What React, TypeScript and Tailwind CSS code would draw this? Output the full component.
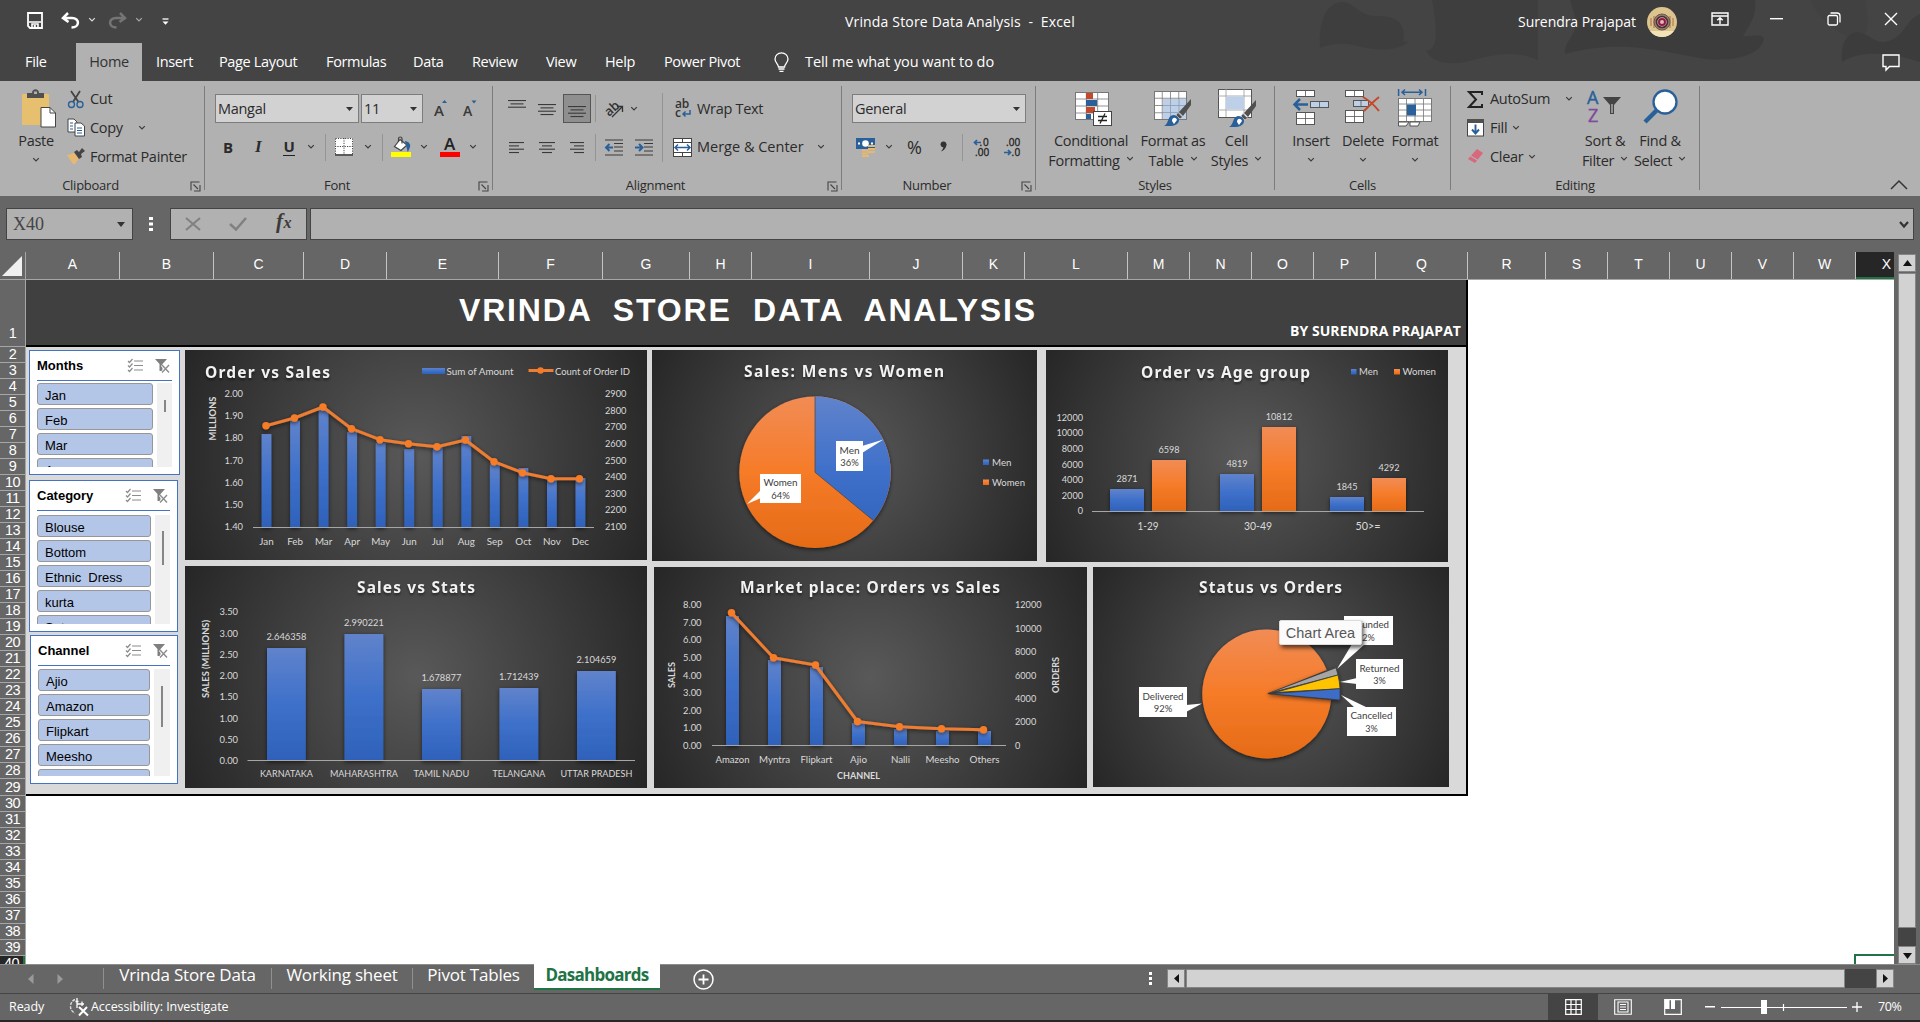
import React from "react";

type Kids = { children?: React.ReactNode };

/* ---------- small shared pieces ---------- */

function Ico({ w, h, cls = "", children }: { w: number; h: number; cls?: string } & Kids) {
  return (
    <svg width={w} height={h} viewBox={`0 0 ${w} ${h}`} fill="none" className={"shrink-0 overflow-visible " + cls}>
      {children}
    </svg>
  );
}

function Chev({ cls = "", color = "#3b3b3b" }: { cls?: string; color?: string }) {
  return (
    <Ico w={8} h={6} cls={cls}>
      <path d="M1.2 1.2 L4 4 L6.8 1.2" stroke={color} strokeWidth="1.2" />
    </Ico>
  );
}

function Launcher() {
  return (
    <Ico w={11} h={11}>
      <path d="M1 9.5V1H9.5M3.5 3.5L8 8M10 4V10H4" stroke="#444" strokeWidth="1.1" />
    </Ico>
  );
}

function Combo({ cls, children }: { cls: string } & Kids) {
  return (
    <div className={"flex h-[29px] shrink-0 items-center justify-between border border-[#7d7d7d] bg-[#d2d2d2] pr-[5px] pl-[2px] " + cls}>
      <span>{children}</span>
      <Ico w={7} h={4}>
        <path d="M0 0H7L3.5 4Z" fill="#333" />
      </Ico>
    </div>
  );
}

function Group({ cls, label, launcher, children }: { cls: string; label: string; launcher?: boolean } & Kids) {
  return (
    <div className={"flex h-[104px] shrink-0 flex-col border-r border-[#7c7c7c] " + cls}>
      <div className="flex h-[91px] shrink-0">{children}</div>
      <div className="flex h-[18px] items-center text-[13px] tracking-[-0.25px]">
        <span className={"flex-1 text-center " + (launcher ? "-ml-[9px]" : "ml-[14px]")}>{label}</span>
        <span className="flex w-[14px]">{launcher && <Launcher />}</span>
      </div>
    </div>
  );
}

function Big({ cls, icon, lines, drop }: { cls: string; icon: React.ReactNode; lines: string[]; drop?: boolean }) {
  return (
    <div className={"flex shrink-0 flex-col items-center " + cls}>
      <div className="flex h-[45px] items-start justify-center pt-[3px]">{icon}</div>
      <div className="h-[20px] leading-[20px] whitespace-nowrap">{lines[0]}</div>
      <div className="flex h-[20px] items-center gap-[6px] leading-[20px] whitespace-nowrap">
        {lines[1] && <span>{lines[1]}</span>}
        <Chev cls={drop ? "-mt-[4px]" : "-mt-[2px]"} />
      </div>
    </div>
  );
}

function Lines({ ws, right, center, y0 = 1 }: { ws: number[]; right?: boolean; center?: boolean; y0?: number }) {
  return (
    <>
      {ws.map((w, i) => {
        const x = right ? 18 - w : center ? (18 - w) / 2 : 0;
        return <rect key={i} x={x} y={y0 + i * 3.33} width={w} height="1.1" fill="#3a3a3a" />;
      })}
    </>
  );
}

const Vr = ({ cls }: { cls: string }) => <div className={"w-px shrink-0 bg-[#949494] " + cls} />;

/* ---------- title bar ---------- */

function TitleBar() {
  return (
    <div className="relative h-[81px] bg-[#444444]">
      <svg className="absolute top-0 right-0 opacity-80" width="640" height="81" viewBox="0 0 640 81" fill="#3b3b3b">
        <path d="M40 48C38 15 50 2 63 2C76 3 80 18 100 16C122 16 126 30 123 42L128 41C120 52 95 51 78 46C62 42 50 44 40 48Z" opacity=".75" />
        <path d="M152 0H258V60C235 50 215 54 190 61C165 67 150 60 146 50C160 52 156 20 152 0Z" opacity=".75" />
        <path d="M290 0H475C477 15 470 25 463 36C475 37 480 33 484 38C482 55 455 62 425 59C385 52 340 38 285 54C284 40 295 40 296 20Z" />
        <path d="M530 0H586C588 20 590 34 580 40C560 38 540 20 530 0Z" opacity=".35" />
        <path d="M562 62C560 42 568 32 578 32C590 34 592 42 605 42C625 38 625 20 640 14V62C610 52 580 50 562 62Z" />
      </svg>
      <div className="relative flex h-[43px] items-center text-[14px] text-white">
        <Ico w={16} h={17} cls="mt-[-3px] ml-[27px]">
          <path d="M1 1H15V16H3L1 14Z" stroke="#fff" strokeWidth="1.8" />
          <path d="M2 10H14M5 16V12H11V16" stroke="#fff" strokeWidth="1.6" />
          <rect x="6.8" y="13" width="2" height="3" fill="#fff" />
        </Ico>
        <Ico w={19} h={17} cls="mt-[-2px] ml-[18px]">
          <path d="M7 1L2 6L7.500 10M2.500 6H11C19 6 19 15.500 10.500 15.500" stroke="#fff" strokeWidth="2.500" />
        </Ico>
        <Chev cls="mt-[-4px] ml-[8px]" color="#ddd" />
        <Ico w={19} h={17} cls="mt-[-2px] ml-[12px]">
          <path d="M12 1L17 6L11.500 10M16.500 6H8C0 6 0 15.500 8.500 15.500" stroke="#757575" strokeWidth="2.500" />
        </Ico>
        <Chev cls="mt-[-4px] ml-[8px]" color="#aaa" />
        <Ico w={7} h={7} cls="ml-[19px]">
          <path d="M0.500 1H6.500" stroke="#fff" strokeWidth="1.300" />
          <path d="M0.500 3.500H6.500L3.500 6.800Z" fill="#fff" />
        </Ico>
        <span className="ml-[676px] w-[673px] tracking-[0.17px] whitespace-pre">Vrinda Store Data Analysis  -  Excel</span>
        <span className="w-[129px] tracking-[-0.05px]">Surendra Prajapat</span>
        <Ico w={30} h={30}>
          <circle cx="15" cy="15" r="15" fill="#dcc48f" />
          <path d="M3 24A15 15 0 0 0 27 24Z" fill="#f3e3b8" />
          <path d="M4 11V19M7 9V21M23 9V21M26 11V19" stroke="#b98a62" strokeWidth="1.500" />
          <circle cx="15" cy="15" r="8" fill="#9b7a66" stroke="#6b5a4a" />
          <circle cx="15" cy="15" r="5.500" fill="#d8b6a0" stroke="#45303a" strokeWidth="1.600" />
          <circle cx="15" cy="15" r="3" fill="#e8b8b0" stroke="#8c1d4b" strokeWidth="2" />
        </Ico>
        <Ico w={18} h={14} cls="mt-[-5px] ml-[34px]">
          <path d="M1 1H17V13H1ZM1 4H17M9 12V6M6.300 8.300L9 5.800L11.700 8.300" stroke="#fff" strokeWidth="1.400" />
        </Ico>
        <Ico w={13} h={2} cls="mt-[-6px] ml-[41px]">
          <rect width="13" height="1.400" fill="#fff" />
        </Ico>
        <Ico w={14} h={14} cls="mt-[-5px] ml-[44px]">
          <rect x="1" y="3.500" width="9.500" height="9.500" rx="1.500" stroke="#fff" strokeWidth="1.300" />
          <path d="M3.500 1H10C12 1 13 2 13 4V10.500" stroke="#fff" strokeWidth="1.300" />
        </Ico>
        <Ico w={14} h={14} cls="mt-[-5px] ml-[43px]">
          <path d="M1 1L13 13M13 1L1 13" stroke="#fff" strokeWidth="1.400" />
        </Ico>
      </div>
      <div className="relative flex h-[38px] items-center text-[14.500px] tracking-[-0.35px] whitespace-nowrap text-white">
        <span className="ml-[25px] w-[51px]">File</span>
        <span className="flex h-full w-[66px] items-center justify-center bg-[#b1b1b1] text-[#333]">Home</span>
        <span className="ml-[14px] w-[63px]">Insert</span>
        <span className="w-[107px]">Page Layout</span>
        <span className="w-[87px]">Formulas</span>
        <span className="w-[59px]">Data</span>
        <span className="w-[74px]">Review</span>
        <span className="w-[59px]">View</span>
        <span className="w-[59px]">Help</span>
        <span className="w-[110px]">Power Pivot</span>
        <Ico w={15} h={20}>
          <path d="M4.500 15C4.500 12 1 11 1 7A6.500 6.200 0 0 1 14 7C14 11 10.500 12 10.500 15ZM4.500 17H10.500M5.500 19.300H9.500" stroke="#fff" strokeWidth="1.300" />
        </Ico>
        <span className="ml-[16px] w-[1077px] tracking-[-0.06px]">Tell me what you want to do</span>
        <Ico w={18} h={17}>
          <path d="M1 1H17V12.500H7.500L4 16V12.500H1Z" stroke="#fff" strokeWidth="1.400" />
        </Ico>
      </div>
    </div>
  );
}

/* ---------- ribbon icons ---------- */

const PasteIcon = (
  <Ico w={34} h={39}>
    <rect x="0" y="5" width="27" height="31" rx="1" fill="#e7c06f" />
    <path d="M5 9V4H10C10 -1 17 -1 17 4H22V9Z" fill="#505050" />
    <rect x="12" y="2.500" width="3" height="2.500" fill="#b1b1b1" />
    <path d="M19 18.500H28L33.500 24V38H19Z" fill="#fff" stroke="#444" />
    <path d="M28 18.500V24H33.500" stroke="#444" />
  </Ico>
);

function MiniGrid({ cols, rows, w, h, x = 0, y = 0, fill = "#fff", stroke = "#555" }: { cols: number; rows: number; w: number; h: number; x?: number; y?: number; fill?: string; stroke?: string }) {
  return (
    <>
      <rect x={x + 0.5} y={y + 0.5} width={w - 1} height={h - 1} fill={fill} stroke={stroke} />
      {Array.from({ length: cols - 1 }, (_, i) => (
        <path key={"c" + i} d={`M${x + ((i + 1) * w) / cols} ${y}v${h}`} stroke={stroke} strokeWidth=".8" />
      ))}
      {Array.from({ length: rows - 1 }, (_, i) => (
        <path key={"r" + i} d={`M${x} ${y + ((i + 1) * h) / rows}h${w}`} stroke={stroke} strokeWidth=".8" />
      ))}
    </>
  );
}

const Brush = ({ x, y }: { x: number; y: number }) => (
  <g transform={`translate(${x} ${y})`}>
    <path d="M27 0V6L19 17L15 13Z" fill="#505050" />
    <path d="M14 13.500L18.500 18L16 20L12 16Z" fill="#505050" stroke="#ddd" strokeWidth=".6" />
    <path d="M0 27C5 25 3 17 9 16C15 16 17 22 13 25C10 27.500 5 27 0 27Z" fill="#2a6099" />
    <path d="M8 22C8 18 12 18 13 21L10 25Z" fill="#fff" />
  </g>
);

const CondIcon = (
  <Ico w={37} h={36} cls="mt-[3px]">
    <MiniGrid cols={3} rows={4} w={34} h={28} stroke="#777" />
    <rect x="11" y="1" width="7" height="6" fill="#c4492a" />
    <rect x="11" y="8" width="11" height="6" fill="#2a6099" />
    <rect x="11" y="15" width="9" height="6" fill="#c4492a" />
    <rect x="11" y="22" width="5" height="5" fill="#2a6099" />
    <rect x="18.500" y="19.500" width="18" height="14" fill="#fff" stroke="#444" />
    <path d="M23 24.500H32M23 28.500H32M30 21.500L25 31.500" stroke="#222" strokeWidth="1.300" />
  </Ico>
);
const TableIcon = (
  <Ico w={38} h={36} cls="mt-[2px]">
    <MiniGrid cols={4} rows={4} w={33} h={29} stroke="#777" />
    <rect x="9" y="8" width="23" height="20" fill="#bdd0e8" />
    <path d="M16.500 8V28M25 8V28M9 14.500H32M9 21.500H32" stroke="#8a9bb0" strokeWidth=".8" />
    <Brush x={10} y={8} />
  </Ico>
);
const StyleIcon = (
  <Ico w={38} h={38}>
    <rect x=".5" y=".5" width="33" height="28" fill="#fff" stroke="#555" />
    <path d="M8 0V28M26 0V28M0 7H33M0 21H33" stroke="#999" strokeWidth=".8" />
    <rect x="8" y="7.500" width="18" height="13" fill="#bdd0e8" />
    <Brush x={11} y={11} />
  </Ico>
);
const InsertIcon = (
  <Ico w={36} h={36}>
    <MiniGrid cols={2} rows={1} x={3} y={1} w={19} h={7} />
    <MiniGrid cols={2} rows={1} x={17} y={12} w={19} h={7} fill="#bdd0e8" />
    <MiniGrid cols={2} rows={2} x={3} y={23} w={19} h={13} />
    <path d="M15 15.500H2M7 10L1.500 15.500L7 21" stroke="#2a6099" strokeWidth="2.500" />
  </Ico>
);
const DeleteIcon = (
  <Ico w={36} h={36}>
    <MiniGrid cols={2} rows={1} x={0} y={1} w={19} h={7} />
    <MiniGrid cols={2} rows={1} x={8} y={11} w={16} h={7} fill="#bdd0e8" />
    <MiniGrid cols={2} rows={2} x={0} y={21} w={19} h={13} />
    <path d="M18 8C25 12 30 17 34 22M34 8C29 12 23 18 19 22" stroke="#c4492a" strokeWidth="2" />
  </Ico>
);
const FormatIcon = (
  <Ico w={34} h={38}>
    <path d="M.6 0V7M27.500 0V7M4 3.300H24M7 .5L4 3.300L7 6M21 .5L24 3.300L21 6" stroke="#2a6099" strokeWidth="1.500" />
    <MiniGrid cols={4} rows={4} x={0} y={9} w={34} h={24} stroke="#777" />
    <rect x="9" y="15.500" width="9" height="11" fill="#2a6099" />
    <path d="M.5 33H11L8 37H.5ZM12 33H22L20 37H12Z" fill="#fff" stroke="#555" />
  </Ico>
);
const SortIcon = (
  <Ico w={36} h={36}>
    <text x="0" y="15" fontSize="18" fontFamily="Open Sans, sans-serif" fill="#2a6099" stroke="#2a6099" strokeWidth=".4">A</text>
    <text x="1" y="32.500" fontSize="18" fontFamily="Open Sans, sans-serif" fill="#7f4a9c" stroke="#7f4a9c" strokeWidth=".4">Z</text>
    <path d="M16 8H34L27 16V25H23V16Z" fill="#444" />
    <path d="M25 15V24" stroke="#ddd" />
  </Ico>
);
const FindIcon = (
  <Ico w={35} h={36}>
    <path d="M2 33L14 21" stroke="#2a6099" strokeWidth="4.500" />
    <circle cx="22" cy="13" r="11.500" fill="#fff" stroke="#2a6099" strokeWidth="2.300" />
  </Ico>
);

/* ---------- ribbon ---------- */

function Ribbon() {
  return (
    <div className="flex h-[115px] bg-[#b1b1b1] pt-[5px] text-[14.500px] tracking-[-0.3px] text-[#2b2b2b]">
      <Group cls="w-[205px]" label="Clipboard" launcher>
        <Big cls="ml-[13px] w-[46px]" icon={<div className="ml-[5px]">{PasteIcon}</div>} lines={["Paste"]} />
        <div className="-mt-px ml-[8px] flex flex-col whitespace-nowrap">
          <div className="flex h-[28px] items-center">
            <Ico w={18} h={19}>
              <path d="M4 1L11.500 12M13 1L6 12" stroke="#444" strokeWidth="1.800" />
              <circle cx="4.500" cy="14.500" r="3" stroke="#2a6099" strokeWidth="1.400" />
              <circle cx="13" cy="14.500" r="3" stroke="#2a6099" strokeWidth="1.400" />
            </Ico>
            <span className="ml-[5px]">Cut</span>
          </div>
          <div className="flex h-[29px] items-center">
            <Ico w={18} h={19}>
              <path d="M1 1H7L10 4V14H1Z" fill="#fff" stroke="#444" />
              <path d="M3 5H6M3 8H6M3 11H6" stroke="#2a6099" />
              <path d="M8 5H14L17.500 8V18H8Z" fill="#fff" stroke="#444" />
              <path d="M10 10H15M10 12.500H15M10 15H15" stroke="#2a6099" />
            </Ico>
            <span className="ml-[5px] w-[48px]">Copy</span>
            <Chev />
          </div>
          <div className="flex h-[29px] items-center">
            <Ico w={18} h={17}>
              <path d="M0 7L7 5L12 10L8 16H6Z" fill="#e7b870" />
              <path d="M7 4L10 2L12 4L15 0L18 3L14 6L15 9L12 11Z" fill="#444" />
            </Ico>
            <span className="ml-[5px]">Format Painter</span>
          </div>
        </div>
      </Group>

      <Group cls="w-[288px]" label="Font" launcher>
        <div className="ml-[10px] flex flex-col">
          <div className="mt-[8px] flex h-[29px] items-center">
            <Combo cls="w-[144px]">Mangal</Combo>
            <Combo cls="ml-[2px] w-[62px]">11</Combo>
            <Ico w={16} h={17} cls="ml-[11px]">
              <text x="0" y="16" fontSize="15" fontWeight="600" fontFamily="Open Sans, sans-serif" fill="#3a3a3a">A</text>
              <path d="M8 3L10.500 0L13 3Z" fill="#2a6099" />
            </Ico>
            <Ico w={16} h={17} cls="ml-[13px]">
              <text x="0" y="16" fontSize="14" fontWeight="600" fontFamily="Open Sans, sans-serif" fill="#3a3a3a">A</text>
              <path d="M8.500 .5L11 3.500L13.500 .5Z" fill="#2a6099" />
            </Ico>
          </div>
          <div className="mt-[10px] flex h-[28px] items-center text-[15px]">
            <b className="ml-[8px] w-[32px]">B</b>
            <i className="w-[28px] text-[17px] font-bold [font-family:'Liberation_Serif',serif]">I</i>
            <span className="mr-[12px] flex h-[18px] w-[12px] items-center justify-center border-b border-[#222] font-bold">U</span>
            <Chev />
            <Vr cls="ml-[10px] h-[27px]" />
            <Ico w={18} h={18} cls="ml-[9px]">
              <rect width="18" height="18" fill="#fff" />
              <path d="M.5 .5H17.500M.5 .5V16M17.500 .5V16M9 0V16M0 8.500H18" stroke="#444" strokeDasharray="1.200 1.200" />
              <path d="M0 17H18" stroke="#333" strokeWidth="1.600" />
            </Ico>
            <Chev cls="ml-[11px]" />
            <Vr cls="ml-[10px] h-[27px]" />
            <Ico w={21} h={20} cls="ml-[8px]">
              <path d="M9 2.500L16 8L10 13.500L3.500 9.500Z" fill="#fff" stroke="#444" strokeWidth="1.200" />
              <path d="M7.500 5V1.500C7.500 -.5 11 -.5 11 1.500V6.500" stroke="#444" strokeWidth="1.200" />
              <path d="M15 5C19 6 19.500 9 17 13Z" fill="#2a6099" stroke="#2a6099" strokeWidth="1.500" />
              <rect y="15" width="20" height="5" fill="#ffff00" />
            </Ico>
            <Chev cls="ml-[8px]" />
            <Ico w={20} h={20} cls="ml-[12px]">
              <text x="4" y="13" fontSize="17" fontWeight="600" fontFamily="Open Sans, sans-serif" fill="#222">A</text>
              <rect y="15" width="20" height="5" fill="#ff0000" />
            </Ico>
            <Chev cls="ml-[9px]" />
          </div>
        </div>
      </Group>

      <Group cls="w-[349px]" label="Alignment" launcher>
        <div className="ml-[15px] flex flex-col">
          <div className="mt-[8px] flex h-[29px] items-center">
            <Ico w={18} h={16} cls="mt-[-6px]"><Lines ws={[18, 13, 18]} center y0={2} /></Ico>
            <Ico w={18} h={16} cls="ml-[12px]"><Lines ws={[18, 13, 18, 13]} center y0={3} /></Ico>
            <div className="ml-[7px] flex h-[29px] w-[28px] items-end justify-center border border-[#555] bg-[#8f8f8f] pb-[1px]">
              <Ico w={18} h={16}><Lines ws={[18, 13, 18, 13]} center y0={1} /></Ico>
            </div>
            <Vr cls="ml-[4px] h-[27px]" />
            <Ico w={20} h={18} cls="ml-[8px]">
              <text x="2" y="15" fontSize="13" fontWeight="600" fontFamily="Open Sans, sans-serif" fill="#333" transform="rotate(-42 6 12)">ab</text>
              <path d="M8 17L18 7M13 6.500H18.500V12" stroke="#333" strokeWidth="1.300" />
            </Ico>
            <Chev cls="ml-[6px]" />
          </div>
          <div className="mt-[10px] flex h-[28px] items-center">
            <Ico w={15} h={13} cls="ml-[1px]"><Lines ws={[15, 10, 15, 10]} /></Ico>
            <Ico w={18} h={13} cls="ml-[14px]"><Lines ws={[16, 10, 16, 10]} center /></Ico>
            <Ico w={18} h={13} cls="ml-[10px]"><Lines ws={[14, 10, 14, 10]} right /></Ico>
            <Vr cls="ml-[11px] h-[27px]" />
            <Ico w={18} h={17} cls="ml-[9px]">
              <path d="M0 1H18M9 4.500H18M9 8H18M9 12H18M0 16H18" stroke="#3a3a3a" strokeWidth="1.200" />
              <path d="M8 8.500H2M4.500 5L1 8.500L4.500 12" stroke="#2a6099" strokeWidth="2" />
            </Ico>
            <Ico w={18} h={17} cls="ml-[12px]">
              <path d="M0 1H18M9 4.500H18M9 8H18M9 12H18M0 16H18" stroke="#3a3a3a" strokeWidth="1.200" />
              <path d="M0 8.500H6M4 5L7.500 8.500L4 12" stroke="#2a6099" strokeWidth="2" />
            </Ico>
          </div>
        </div>
        <Vr cls="mt-[7px] ml-[9px] h-[69px]" />
        <div className="ml-[10px] flex flex-col whitespace-nowrap">
          <div className="mt-[8px] flex h-[29px] items-center">
            <Ico w={19} h={18}>
              <text x="2" y="8" fontSize="12" fontWeight="600" fontFamily="Open Sans, sans-serif" fill="#333">ab</text>
              <text x="2" y="17" fontSize="12" fontWeight="600" fontFamily="Open Sans, sans-serif" fill="#333">c</text>
              <path d="M17 10V14H10M12.500 11.500L10 14L12.500 16.500" stroke="#2a6099" strokeWidth="1.500" />
            </Ico>
            <span className="ml-[5px]">Wrap Text</span>
          </div>
          <div className="mt-[10px] flex h-[28px] items-center">
            <Ico w={19} h={19}>
              <rect x=".5" y=".5" width="18" height="18" fill="#fff" stroke="#444" />
              <path d="M0 4.500H19M0 14.500H19M9.500 0V4M9.500 15V19" stroke="#444" />
              <path d="M2 9.500H17M5 6.500L2 9.500L5 12.500M14 6.500L17 9.500L14 12.500" stroke="#2a6099" strokeWidth="1.500" />
            </Ico>
            <span className="ml-[5px] w-[120px] tracking-[0px]">Merge &amp; Center</span>
            <Chev />
          </div>
        </div>
      </Group>

      <Group cls="w-[194px]" label="Number" launcher>
        <div className="ml-[10px] flex flex-col">
          <div className="mt-[8px] flex h-[29px] items-center"><Combo cls="w-[174px]">General</Combo></div>
          <div className="mt-[10px] flex h-[28px] items-center">
            <Ico w={20} h={19} cls="ml-[4px]">
              <rect width="19" height="11" fill="#2a6099" />
              <circle cx="9.500" cy="5.500" r="3.300" fill="#fff" />
              <path d="M2 5.500H4M15 5.500H17" stroke="#fff" strokeWidth="2" />
              <path d="M12 8H19M12 11H19M12 14H19M6 12.500H12M6 15.500H12M6 18H13" stroke="#e7b870" strokeWidth="2" />
            </Ico>
            <Chev cls="ml-[9px]" />
            <span className="ml-[14px] w-[33px] text-[18px]">%</span>
            <Ico w={8} h={11} cls="mr-[14px] -mt-[2px]">
              <circle cx="3.500" cy="3.300" r="2.900" fill="#333" />
              <path d="M6.400 3.300C6.400 7 4 9.500 1 10.500C2.800 8.500 3.500 7 3.500 4Z" fill="#333" />
            </Ico>
            <Vr cls="h-[27px]" />
            <Ico w={17} h={19} cls="ml-[10px]">
              <path d="M8 4.500H2M4 2L1.500 4.500L4 7" stroke="#2a6099" strokeWidth="1.700" />
              <text x="6.500" y="8" fontSize="10" fontFamily="Open Sans, sans-serif" fill="#222" stroke="#222" strokeWidth=".3" textLength="9">.0</text>
              <text x="2" y="18" fontSize="10" fontFamily="Open Sans, sans-serif" fill="#222" stroke="#222" strokeWidth=".3" textLength="14">.00</text>
            </Ico>
            <Ico w={17} h={19} cls="ml-[14px]">
              <text x="2" y="8" fontSize="10" fontFamily="Open Sans, sans-serif" fill="#222" stroke="#222" strokeWidth=".3" textLength="14">.00</text>
              <text x="7.500" y="18" fontSize="10" fontFamily="Open Sans, sans-serif" fill="#222" stroke="#222" strokeWidth=".3" textLength="8.500">.0</text>
              <path d="M0 14.500H6M4 12L6.500 14.500L4 17" stroke="#2a6099" strokeWidth="1.700" />
            </Ico>
          </div>
        </div>
      </Group>

      <Group cls="w-[239px]" label="Styles">
        <Big cls="ml-[10px] w-[90px]" icon={<div className="ml-[4px]">{CondIcon}</div>} lines={["Conditional", "Formatting"]} drop />
        <Big cls="w-[74px]" icon={TableIcon} lines={["Format as", "Table"]} drop />
        <Big cls="w-[53px]" icon={StyleIcon} lines={["Cell", "Styles"]} drop />
      </Group>

      <Group cls="w-[176px]" label="Cells">
        <Big cls="ml-[11px] w-[50px]" icon={InsertIcon} lines={["Insert"]} />
        <Big cls="w-[54px]" icon={DeleteIcon} lines={["Delete"]} />
        <Big cls="w-[50px]" icon={FormatIcon} lines={["Format"]} />
      </Group>

      <Group cls="w-[249px]" label="Editing">
        <div className="-mt-px ml-[16px] flex w-[111px] flex-col whitespace-nowrap">
          <div className="flex h-[28px] items-center">
            <Ico w={17} h={17}>
              <path d="M15 4V1H2L9 8.500L2 16H15V13" stroke="#222" strokeWidth="2" />
            </Ico>
            <span className="ml-[6px] w-[75px]">AutoSum</span>
            <Chev />
          </div>
          <div className="flex h-[29px] items-center">
            <Ico w={17} h={18}>
              <rect x=".5" y="1" width="16" height="16" fill="#fff" stroke="#444" />
              <rect width="17" height="4" fill="#505050" />
              <path d="M8.500 5.500V14M5 10.500L8.500 14.500L12 10.500" stroke="#2a6099" strokeWidth="1.900" />
            </Ico>
            <span className="mr-[5px] ml-[6px]">Fill</span>
            <Chev />
          </div>
          <div className="flex h-[29px] items-center">
            <Ico w={17} h={17}>
              <path d="M10 1L16 5L8 15L1 11Z" fill="#d8687c" />
              <path d="M3 7.500L11 12.500" stroke="#b1b1b1" strokeWidth="1.200" />
            </Ico>
            <span className="mr-[5px] ml-[6px]">Clear</span>
            <Chev />
          </div>
        </div>
        <Big cls="w-[54px]" icon={SortIcon} lines={["Sort &", "Filter"]} drop />
        <Big cls="w-[56px]" icon={FindIcon} lines={["Find &", "Select"]} drop />
      </Group>
      <div className="flex flex-1 items-end justify-end pr-[12px] pb-[6px]">
        <Ico w={18} h={10}>
          <path d="M1 9L9 1L17 9" stroke="#333" strokeWidth="1.500" />
        </Ico>
      </div>
    </div>
  );
}

function FormulaBar() {
  return (
    <div className="flex h-[56px] items-center bg-[#666666] pl-[6px]">
      <div className="flex h-[32px] w-[127px] items-center justify-between border border-[#444] bg-[#b1b1b1] pr-[7px] pl-[6px]">
        <span className="text-[18px] text-[#444] [font-family:'Liberation_Serif',serif]">X40</span>
        <Ico w={8} h={5}><path d="M0 0H8L4 5Z" fill="#333" /></Ico>
      </div>
      <Ico w={4} h={14} cls="ml-[16px]"><path d="M0 0H4V3H0ZM0 5.500H4V8.500H0ZM0 11H4V14H0Z" fill="#fff" /></Ico>
      <div className="ml-[17px] flex h-[32px] w-[137px] items-center border border-[#444] bg-[#b1b1b1]">
        <Ico w={16} h={14} cls="ml-[14px]"><path d="M1 1L15 13M15 1L1 13" stroke="#808080" strokeWidth="2" /></Ico>
        <Ico w={18} h={14} cls="ml-[28px]"><path d="M1 7L7 12.500L17 1" stroke="#808080" strokeWidth="2.500" /></Ico>
        <span className="mt-[-4px] ml-[29px] text-[21px] font-bold tracking-[0.5px] text-[#3a3a3a] italic [font-family:'Liberation_Serif',serif]">f<span className="text-[16px]">x</span></span>
      </div>
      <div className="ml-[3px] flex h-[32px] w-[1604px] items-center justify-end border border-[#444] bg-[#b1b1b1] pr-[4px]">
        <Ico w={10} h={7}><path d="M1 1L5 5.500L9 1" stroke="#333" strokeWidth="2.200" /></Ico>
      </div>
    </div>
  );
}

/* ---------- chart primitives ---------- */

type LabelProps = {
  x: number; y: number; w?: number; size?: number; anchor?: "start" | "middle" | "end";
  bold?: boolean; fill?: string; children: string; vertical?: boolean;
};

function Label({ x, y, w, size = 9.8, anchor = "middle", bold, fill = "#d9d9d9", children, vertical }: LabelProps) {
  const by = y + size * 0.36;
  return (
    <text
      x={x} y={by} fontSize={size} textAnchor={anchor} fill={fill} fontWeight={bold ? 700 : 400}
      textLength={w} lengthAdjust="spacingAndGlyphs"
      transform={vertical ? `rotate(-90 ${x} ${y})` : undefined}
    >
      {children}
    </text>
  );
}

function ChartTitle({ x, y, w, children }: { x: number; y: number; w: number; children: string }) {
  return (
    <text x={x} y={y + 5.5} fontSize="15.500" fontWeight="700" fontFamily="'Noto Sans', sans-serif" fill="#f2f2f2" textLength={w} className="drop-shadow-[0_2px_1px_rgba(0,0,0,0.45)]">
      {children}
    </text>
  );
}

function Chart({ cls, x, y, w, h, id, children }: { cls: string; x: number; y: number; w: number; h: number; id: string } & Kids) {
  return (
    <div className={"shrink-0 bg-[radial-gradient(circle,#595959,#262626)] " + cls}>
      <svg width={w} height={h} viewBox={`${x} ${y} ${w} ${h}`} fontFamily="Lato, 'Open Sans', sans-serif">
        <defs>
          <linearGradient id={id + "b"} x1="0" y1="0" x2="0" y2="1">
            <stop offset="0" stopColor="#6083cb" /><stop offset=".5" stopColor="#3e70ca" /><stop offset="1" stopColor="#2e61ba" />
          </linearGradient>
          <linearGradient id={id + "o"} x1="0" y1="0" x2="0" y2="1">
            <stop offset="0" stopColor="#f18c55" /><stop offset=".5" stopColor="#f67b28" /><stop offset="1" stopColor="#e56b17" />
          </linearGradient>
          <filter id={id + "s"} x="-30%" y="-30%" width="160%" height="160%">
            <feDropShadow dx="0" dy="1.500" stdDeviation="2" floodColor="#000" floodOpacity=".6" />
          </filter>
        </defs>
        {children}
      </svg>
    </div>
  );
}

function Series({ id, pts }: { id: string; pts: number[][] }) {
  return (
    <g filter={`url(#${id}s)`}>
      <polyline points={pts.map((p) => p.join(",")).join(" ")} stroke="#ed7d31" strokeWidth="3" fill="none" strokeLinejoin="round" />
      {pts.map((p, i) => <circle key={i} cx={p[0]} cy={p[1]} r="3.700" fill="#f67b28" />)}
    </g>
  );
}

function Callout({ x, y, w, h, tip, text, pct, tw }: { x: number; y: number; w: number; h: number; tip: string; text: string; pct: string; tw: number }) {
  return (
    <>
      <rect x={x} y={y} width={w} height={h} fill="#fff" />
      <polygon points={tip} fill="#fff" />
      <Label x={x + w / 2} y={y + h * 0.3} w={tw} fill="#404040">{text}</Label>
      <Label x={x + w / 2} y={y + h * 0.73} w={pct.length * 5.5 + (pct.length > 2 ? 2 : 1.5)} fill="#404040">{pct}</Label>
    </>
  );
}

const MONTHS: [string, number, number][] = [
  ["Jan", 434, 425.7], ["Feb", 420.7, 418], ["Mar", 410, 407], ["Apr", 432, 428.7], ["May", 442.7, 439.7], ["Jun", 449, 443.7],
  ["Jul", 447, 446.7], ["Aug", 436, 440], ["Sep", 464.3, 461.7], ["Oct", 468, 472.7], ["Nov", 479.7, 478.7], ["Dec", 478, 478.7],
];

function OrderVsSales() {
  return (
    <Chart cls="h-[210px] w-[462px]" x={185} y={350} w={462} h={210} id="c1">
      <ChartTitle x={205} y={372} w={125}>Order vs Sales</ChartTitle>
      <rect x="422" y="368" width="23" height="6" fill="url(#c1b)" />
      <Label x={446.500} y={371} w={67} anchor="start">Sum of Amount</Label>
      <path d="M528.500 370.500H553.500" stroke="#ed7d31" strokeWidth="3" />
      <circle cx="540.500" cy="370.500" r="3.200" fill="#f67b28" />
      <Label x={555} y={371} w={75} anchor="start">Count of Order ID</Label>
      {["2.00", "1.90", "1.80", "1.70", "1.60", "1.50", "1.40"].map((t, i) => (
        <Label key={t} x={243} y={393.7 + i * 22.1} w={18.500} anchor="end">{t}</Label>
      ))}
      {[2900, 2800, 2700, 2600, 2500, 2400, 2300, 2200, 2100].map((t, i) => (
        <Label key={t} x={605} y={393.7 + i * 16.6} w={21.500} anchor="start">{String(t)}</Label>
      ))}
      <Label x={212} y={418.500} w={44} bold vertical>MILLIONS</Label>
      <g filter="url(#c1s)">
        {MONTHS.map(([m, top], i) => (
          <rect key={m} x={261.600 + i * 28.54} y={top} width="9.800" height={527.3 - top} fill="url(#c1b)" />
        ))}
      </g>
      <path d="M253 527.500H594" stroke="#a6a6a6" />
      {MONTHS.map(([m], i) => <Label key={m} x={266.500 + i * 28.54} y={541}>{m}</Label>)}
      <Series id="c1" pts={MONTHS.map(([, , v], i) => [266 + i * 28.5, v])} />
    </Chart>
  );
}

function MensVsWomen() {
  return (
    <Chart cls="ml-[5px] h-[211px] w-[385px]" x={652} y={350} w={385} h={211} id="c2">
      <ChartTitle x={744} y={371} w={200}>Sales: Mens vs Women</ChartTitle>
      <g filter="url(#c2s)">
        <circle cx="815" cy="472.300" r="75.700" fill="url(#c2o)" />
      </g>
      <clipPath id="menSlice"><path d="M815 472.300V390H900V545L873.500 520.700Z" /></clipPath>
      <circle cx="815" cy="472.300" r="75.700" fill="url(#c2b)" clipPath="url(#menSlice)" />
      <path d="M815 396.500V472.300L873.500 520.700" stroke="#444" strokeWidth=".7" fill="none" />
      <Callout x={836} y={441} w={27} h={30} tip="862,446 883.500,439.500 862,453" text="Men" pct="36%" tw={20} />
      <Callout x={760} y={474} w={41} h={29} tip="761,490 747,504 761,498" text="Women" pct="64%" tw={34} />
      <rect x="983" y="459.500" width="6" height="5.500" fill="url(#c2b)" />
      <Label x={992} y={462} w={19.500} anchor="start">Men</Label>
      <rect x="983" y="479.500" width="6" height="5.500" fill="url(#c2o)" />
      <Label x={992} y={482} w={33} anchor="start">Women</Label>
    </Chart>
  );
}

function AgeGroup() {
  const bars: [number, number, string, string][] = [
    [1110, 489, "2871", "b"], [1152, 460, "6598", "o"], [1220, 474, "4819", "b"],
    [1262, 427, "10812", "o"], [1330, 497, "1845", "b"], [1372, 478, "4292", "o"],
  ];
  return (
    <Chart cls="ml-[9px] h-[212px] w-[402px]" x={1046} y={350} w={402} h={212} id="c3">
      <ChartTitle x={1141} y={372} w={169}>Order vs Age group</ChartTitle>
      <rect x="1351" y="369" width="5.500" height="5.500" fill="url(#c3b)" />
      <Label x={1359} y={371.500} w={19} anchor="start">Men</Label>
      <rect x="1394" y="369" width="6" height="5.500" fill="url(#c3o)" />
      <Label x={1402.500} y={371.500} w={33.500} anchor="start">Women</Label>
      {[12000, 10000, 8000, 6000, 4000, 2000, 0].map((t, i) => (
        <Label key={t} x={1083} y={417.3 + i * 15.56} w={String(t).length * 5.3} anchor="end">{String(t)}</Label>
      ))}
      <g filter="url(#c3s)">
        {bars.map(([x, top, , c]) => <rect key={x} x={x} y={top} width="34" height={511.300 - top} fill={`url(#c3${c})`} />)}
      </g>
      {bars.map(([x, top, v]) => <Label key={x} x={x + 17} y={top - 11} w={v.length * 5.3}>{v}</Label>)}
      <path d="M1092 511.500H1424" stroke="#a6a6a6" />
      <Label x={1148} y={526.500} w={21} size={10.5}>1-29</Label>
      <Label x={1258} y={526.500} w={28} size={10.5}>30-49</Label>
      <Label x={1368} y={526.500} w={25} size={10.5}>50&gt;=</Label>
    </Chart>
  );
}

function SalesVsStats() {
  const bars: [number, number, string, string, number][] = [
    [267, 648, "2.646358", "KARNATAKA", 53], [344.500, 634, "2.990221", "MAHARASHTRA", 68], [422, 689, "1.678877", "TAMIL NADU", 56],
    [499.500, 688, "1.712439", "TELANGANA", 53], [577, 671, "2.104659", "UTTAR PRADESH", 72],
  ];
  return (
    <Chart cls="h-[222px] w-[462px]" x={185} y={566} w={462} h={222} id="c4">
      <ChartTitle x={357} y={587} w={118}>Sales vs Stats</ChartTitle>
      {["3.50", "3.00", "2.50", "2.00", "1.50", "1.00", "0.50", "0.00"].map((t, i) => (
        <Label key={t} x={238} y={611.7 + i * 21.28} w={18.500} anchor="end">{t}</Label>
      ))}
      <Label x={205.500} y={659} w={78} bold vertical>SALES (MILLIONS)</Label>
      <g filter="url(#c4s)">
        {bars.map(([x, top]) => <rect key={x} x={x} y={top} width="38.800" height={760.700 - top} fill="url(#c4b)" />)}
      </g>
      <path d="M247.500 760.500H635" stroke="#a6a6a6" />
      {bars.map(([x, top, v, n, w]) => (
        <g key={n}>
          <Label x={x + 19.400} y={top - 11.500} w={40}>{v}</Label>
          <Label x={x + 19.400} y={773.500} w={w}>{n}</Label>
        </g>
      ))}
    </Chart>
  );
}

function MarketPlace() {
  const d: [string, number, number, number][] = [
    ["Amazon", 616, 612.7, 34], ["Myntra", 660, 657.7, 31], ["Flipkart", 667, 665, 32], ["Ajio", 723, 721.5, 17],
    ["Nalli", 729, 726.7, 19], ["Meesho", 731, 728.7, 34], ["Others", 731, 729.7, 30],
  ];
  return (
    <Chart cls="ml-[7px] h-[221px] w-[433px]" x={654} y={567} w={433} h={221} id="c5">
      <ChartTitle x={740} y={587} w={260}>Market place: Orders vs Sales</ChartTitle>
      {["8.00", "7.00", "6.00", "5.00", "4.00", "3.00", "2.00", "1.00", "0.00"].map((t, i) => (
        <Label key={t} x={701.500} y={604.7 + i * 17.58} w={18.500} anchor="end">{t}</Label>
      ))}
      {[12000, 10000, 8000, 6000, 4000, 2000, 0].map((t, i) => (
        <Label key={t} x={1015} y={604.7 + i * 23.45} w={String(t).length * 5.3} anchor="start">{String(t)}</Label>
      ))}
      <Label x={671} y={675} w={26} bold vertical>SALES</Label>
      <Label x={1055.500} y={675} w={36} bold vertical>ORDERS</Label>
      <Label x={858.500} y={775.500} w={43} bold>CHANNEL</Label>
      <g filter="url(#c5s)">
        {d.map(([n, top], i) => <rect key={n} x={726 + i * 42} y={top} width="13" height={745.300 - top} fill="url(#c5b)" />)}
      </g>
      <path d="M712 745.500H1006" stroke="#a6a6a6" />
      {d.map(([n, , , w], i) => <Label key={n} x={732.500 + i * 42} y={759} w={w}>{n}</Label>)}
      <Series id="c5" pts={d.map(([, , v], i) => [731.500 + i * 42, v])} />
    </Chart>
  );
}

function StatusVsOrders() {
  return (
    <div className="relative">
      <Chart cls="ml-[6px] h-[220px] w-[356px]" x={1093} y={567} w={356} h={220} id="c6">
        <ChartTitle x={1199} y={587} w={143}>Status vs Orders</ChartTitle>
        <g filter="url(#c6s)">
          <path d="M1266.700 694L1326.700 670A64.500 64.500 0 1 0 1331 700Z" fill="url(#c6o)" />
        </g>
        <g filter="url(#c6s)" stroke="#3a3a3a" strokeWidth=".8">
          <path d="M1268 693.500L1336 667.700L1338 675Z" fill="#a5a5a5" />
          <path d="M1275 692.500L1338 675A70 70 0 0 1 1340 688.700Z" fill="#ffc305" />
          <path d="M1270 693.800L1340 688.700V700Z" fill="#3e6dc8" />
        </g>
        <Callout x={1139} y={687} w={48} h={30} tip="1186,705 1202,703.500 1186,712" text="Delivered" pct="92%" tw={41} />
        <Callout x={1344} y={616} w={49} h={29} tip="1352,644 1337,669 1365,644" text="Refunded" pct="2%" tw={41} />
        <Callout x={1356} y={659} w={47} h={30} tip="1357,678 1340,682 1357,684" text="Returned" pct="3%" tw={40} />
        <Callout x={1347} y={707} w={49} h={29} tip="1355,708 1341,695 1368,708" text="Cancelled" pct="3%" tw={42} />
      </Chart>
      <div className="absolute top-[53px] left-[192px] flex h-[25px] w-[83px] items-center justify-center rounded-[2px] border border-[#ddd] bg-[#fbfbfb] pt-[2px] text-[14.500px] tracking-[0px] whitespace-nowrap text-[#575757] shadow-[2px_3px_4px_rgba(0,0,0,0.6)]">
        Chart Area
      </div>
    </div>
  );
}

/* ---------- slicers ---------- */

function Slicer({ cls, title, items, head, body, list, btn, thumb }: { cls: string; title: string; items: string[]; head: string; body: string; list: string; btn: string; thumb: string }) {
  return (
    <div className={"flex shrink-0 flex-col border border-[#4472c4] bg-white px-[7px] text-black [font-family:'Liberation_Sans',Arial,sans-serif] " + cls}>
      <div className={"flex shrink-0 items-center border-b border-[#4472c4] " + head}>
        <span className="flex-1 pt-px text-[13px] font-bold tracking-[0px]">{title}</span>
        <Ico w={15} h={13} cls="mr-[12px]">
          <path d="M6 2H15M6 6.500H15M6 11H15" stroke="#8c8c8c" strokeWidth="1.200" />
          <path d="M0 2L1.500 3.500L4.500 0M0 6.500L1.500 8L4.500 4.500M0 11L1.500 12.500L4.500 9" stroke="#8c8c8c" strokeWidth="1.200" />
        </Ico>
        <Ico w={15} h={14} cls="mr-[2px]">
          <path d="M0 0H12L7.500 5V12H4.500V5Z" fill="#7f7f7f" />
          <path d="M7 6L14 13.500M14 6L7 13.500" stroke="#fff" strokeWidth="3" />
          <path d="M7 6L14 13.500M14 6L7 13.500" stroke="#8c8c8c" strokeWidth="1.400" />
        </Ico>
      </div>
      <div className={"flex shrink-0 overflow-hidden " + body}>
        <div className={"flex shrink-0 flex-col gap-[3px] " + list}>
          {items.map((t) => (
            <div key={t} className="flex h-[22px] shrink-0 items-center rounded-[3px] border-[1.500px] border-[#979797] bg-[#b4c6e7] pt-[3px] pl-[7px] text-[13px] whitespace-pre">{t}</div>
          ))}
        </div>
        <div className={"flex flex-1 justify-center bg-[#f0f0f0] " + btn}>
          <div className={"w-[2px] bg-[#868686] " + thumb} />
        </div>
      </div>
    </div>
  );
}

/* ---------- grid ---------- */

const COLS: [string, number][] = [
  ["A", 94], ["B", 94], ["C", 90], ["D", 83], ["E", 112], ["F", 104], ["G", 87], ["H", 62], ["I", 118], ["J", 93], ["K", 62], ["L", 103],
  ["M", 62], ["N", 62], ["O", 62], ["P", 62], ["Q", 92], ["R", 78], ["S", 62], ["T", 62], ["U", 62], ["V", 62], ["W", 62],
];

function Sheet() {
  return (
    <div className="flex h-[712px] bg-[#666666] [font-family:'Liberation_Sans',Arial,sans-serif]">
      <div className="flex w-[26px] shrink-0 flex-col overflow-hidden border-r border-[#a6a6a6] text-[14.500px] text-white">
        <div className="flex h-[28px] shrink-0 items-end justify-end border-b border-[#a6a6a6] pr-[3px] pb-[3px]">
          <Ico w={20} h={20}><path d="M20 0V20H0Z" fill="#f0f0f0" /></Ico>
        </div>
        {Array.from({ length: 40 }, (_, i) => (
          <div
            key={i}
            className={
              "flex shrink-0 items-end justify-center border-b border-[#a6a6a6] leading-[15px] tracking-[-0.5px] " +
              (i === 0 ? "h-[67px] pb-[5px]" : i === 28 ? "h-[17px]" : i === 39 ? "h-[16px] border-r-2 border-r-[#217346] bg-[#262626]" : "h-[16px]")
            }
          >
            {i + 1}
          </div>
        ))}
      </div>
      <div className="flex w-[1868px] shrink-0 flex-col">
        <div className="flex h-[28px] shrink-0 border-b border-[#a6a6a6] text-[14px] text-white">
          {COLS.map(([c, w]) => (
            <div key={c} style={{ width: w }} className="flex shrink-0 items-center justify-center border-r border-[#c4c4c4] pb-[3px]">{c}</div>
          ))}
          <div className="flex flex-1 items-center justify-end border-b-2 border-[#217346] bg-[#262626] pr-[3px] pb-px">X</div>
        </div>
        <div className="flex flex-1 flex-col bg-white">
          <div className="flex h-[516px] w-[1442px] flex-col border-r-2 border-b-2 border-black bg-[#d9d9d9]">
            <div className="flex h-[67px] shrink-0 border-b-2 border-black bg-[#404040] text-white">
              <h1 className="ml-[433px] w-[720px] pt-[7px] text-[32px] leading-[46px] font-bold tracking-[1.820px] whitespace-pre">VRINDA  STORE  DATA  ANALYSIS</h1>
              <div className="flex flex-1 items-end justify-end pr-[5px] pb-[4px] text-[14px] font-bold tracking-[0.05px] whitespace-nowrap [font-family:'Open_Sans',sans-serif]">BY SURENDRA PRAJAPAT</div>
            </div>
            <div className="flex flex-1 pt-[3px]">
              <div className="flex w-[159px] shrink-0 flex-col">
                <Slicer cls="ml-[3px] h-[125px] w-[151px]" title="Months" items={["Jan", "Feb", "Mar", "Apr"]} head="h-[30px]" body="mt-[2px] h-[84px]" list="w-[116px]" btn="ml-[4px] pt-[17px]" thumb="h-[12px]" />
                <Slicer cls="mt-[5px] ml-[3px] h-[152px] w-[149px]" title="Category" items={["Blouse", "Bottom", "Ethnic  Dress", "kurta", "Set"]} head="h-[30px]" body="mt-[4px] h-[109px]" list="w-[114px]" btn="ml-[4px] pt-[16px]" thumb="h-[34px]" />
                <Slicer cls="mt-[3px] ml-[4px] h-[149px] w-[148px]" title="Channel" items={["Ajio", "Amazon", "Flipkart", "Meesho", "Myntra"]} head="h-[30px]" body="mt-[3px] h-[107px]" list="w-[112px]" btn="ml-[4px] pt-[17px]" thumb="h-[41px]" />
              </div>
              <div className="flex flex-col">
                <div className="flex h-[216px] items-start">
                  <OrderVsSales />
                  <MensVsWomen />
                  <AgeGroup />
                </div>
                <div className="flex items-start">
                  <SalesVsStats />
                  <div className="mt-px flex items-start">
                    <MarketPlace />
                    <StatusVsOrders />
                  </div>
                </div>
              </div>
            </div>
          </div>
          <div className="flex flex-1 items-end justify-end">
            <div className="h-[10px] w-[40px] border-t-2 border-l-2 border-[#217346]" />
          </div>
        </div>
      </div>
      <div className="ml-[4px] flex w-[18px] flex-col pt-[2px]">
        <div className="flex h-[18px] shrink-0 items-center justify-center border border-[#858585] bg-[#d2d2d2]">
          <Ico w={9} h={6}><path d="M4.500 0L9 6H0Z" fill="#111" /></Ico>
        </div>
        <div className="mt-px h-[655px] border border-[#858585] bg-[#d2d2d2]" />
        <div className="h-[18px] bg-[#444]" />
        <div className="flex h-[18px] shrink-0 items-center justify-center border border-[#858585] bg-[#d2d2d2] pt-px">
          <Ico w={9} h={6}><path d="M4.500 6L9 0H0Z" fill="#111" /></Ico>
        </div>
      </div>
    </div>
  );
}

/* ---------- bottom bars ---------- */

function SheetTabs() {
  return (
    <div className="flex h-[29px] items-start border-t border-[#8c8c8c] bg-[#666666] text-[17px] tracking-[-0.2px] whitespace-nowrap text-white">
      <Ico w={6} h={10} cls="mt-[9px] ml-[28px]"><path d="M5.500 0V10L0 5Z" fill="#9a9a9a" /></Ico>
      <Ico w={6} h={10} cls="mt-[9px] ml-[23px]"><path d="M.5 0V10L6 5Z" fill="#9a9a9a" /></Ico>
      <div className="mt-[3px] ml-[40px] flex h-[21px] w-[168px] items-center justify-center border-l border-[#909090] pb-[8px]">Vrinda Store Data</div>
      <div className="mt-[3px] flex h-[21px] w-[141px] items-center justify-center border-l border-[#909090] pb-[8px]">Working sheet</div>
      <div className="mt-[3px] flex h-[21px] w-[122px] items-center justify-center border-l border-[#909090] pb-[8px]">Pivot Tables</div>
      <div className="-mt-px flex h-[26px] w-[126px] items-center justify-center border-b-2 border-[#217346] bg-white pb-[3px] font-bold tracking-[-0.75px] text-[#217346]">Dasahboards</div>
      <Ico w={21} h={21} cls="mt-[4px] ml-[33px]">
        <circle cx="10.500" cy="10.500" r="9.500" stroke="#fff" strokeWidth="1.500" />
        <path d="M10.500 5.500V15.500M5.500 10.500H15.500" stroke="#fff" strokeWidth="1.800" />
      </Ico>
      <Ico w={3} h={13} cls="mt-[7px] ml-[435px]"><path d="M0 0H3V3H0ZM0 5H3V8H0ZM0 10H3V13H0Z" fill="#fff" /></Ico>
      <div className="mt-[4px] ml-[15px] flex h-[19px] w-[727px]">
        <div className="flex w-[18px] items-center justify-center border border-[#858585] bg-[#d2d2d2]">
          <Ico w={5} h={9}><path d="M5 0V9L0 4.500Z" fill="#111" /></Ico>
        </div>
        <div className="ml-px w-[659px] border border-[#858585] bg-[#d2d2d2]" />
        <div className="w-[31px] bg-[#444]" />
        <div className="flex w-[18px] items-center justify-center border border-[#858585] bg-[#d2d2d2]">
          <Ico w={5} h={9}><path d="M0 0V9L5 4.500Z" fill="#111" /></Ico>
        </div>
      </div>
    </div>
  );
}

function StatusBar() {
  return (
    <div className="flex h-[29px] items-center border-t border-b-2 border-t-[#444] border-b-[#262626] bg-[#666666] text-[12.500px] tracking-[-0.080px] whitespace-nowrap text-white">
      <span className="ml-[9px] w-[60px]">Ready</span>
      <Ico w={20} h={18}>
        <path d="M6 1.500C0 4 0 13 6 15" stroke="#ddd" strokeWidth="1.400" strokeDasharray="3 1.200" />
        <path d="M8 0V6H15M8 6V10M13 3.500V8M6.500 3.500H9.500" stroke="#fff" strokeWidth="1.300" />
        <path d="M10 9L19 17.500M18 9L10 17.500" stroke="#fff" strokeWidth="2" />
      </Ico>
      <span className="ml-[2px] w-[1457px]">Accessibility: Investigate</span>
      <div className="flex h-full w-[50px] items-center justify-center bg-[#444]">
        <Ico w={17} h={16}><path d="M.7 .7H16.300V15.300H.7ZM6 0V16M11 0V16M0 5.500H17M0 10.500H17" stroke="#fff" strokeWidth="1.200" /></Ico>
      </div>
      <Ico w={18} h={16} cls="ml-[16px]">
        <path d="M.7 .7H17.300V15.300H.7ZM4 3H14V13H4ZM6 5.500H12M6 8H12M6 10.500H12" stroke="#fff" strokeWidth="1.100" />
      </Ico>
      <Ico w={18} h={16} cls="ml-[32px]">
        <path d="M.7 .7H17.300V15.300H.7Z" stroke="#fff" strokeWidth="1.200" />
        <path d="M1 1H5.500V10H1ZM7 1H11V10H7Z" fill="#fff" />
      </Ico>
      <Ico w={10} h={2} cls="ml-[23px]"><rect width="10" height="1.500" fill="#fff" /></Ico>
      <Ico w={126} h={14} cls="ml-[6px]">
        <path d="M0 7.500H126M62.500 4V11" stroke="#fff" strokeWidth="1.200" />
        <rect x="40" width="6" height="14" fill="#fff" />
      </Ico>
      <Ico w={10} h={10} cls="ml-[5px]"><path d="M0 5H10M5 0V10" stroke="#fff" strokeWidth="1.300" /></Ico>
      <span className="ml-[16px] tracking-[-0.4px]">70%</span>
    </div>
  );
}

export default function App() {
  return (
    <div className="flex h-[1022px] w-[1920px] flex-col overflow-hidden bg-[#666666] [font-family:'Open_Sans','Noto_Sans',sans-serif]">
      <TitleBar />
      <Ribbon />
      <FormulaBar />
      <Sheet />
      <SheetTabs />
      <StatusBar />
    </div>
  );
}
